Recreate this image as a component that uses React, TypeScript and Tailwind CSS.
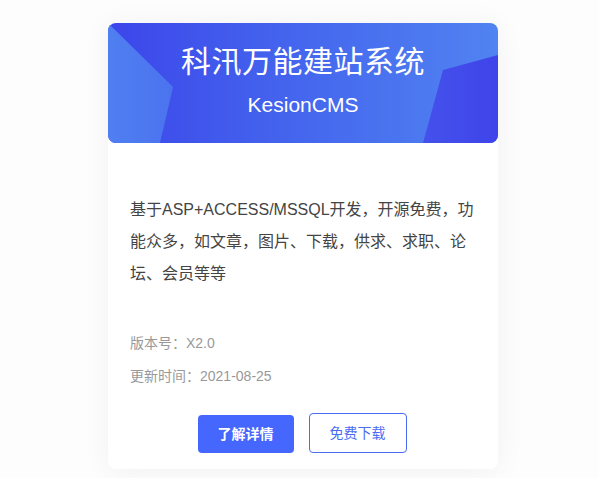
import React from 'react';

const Banner: React.FC = () => (
  <div className="relative h-[120px] rounded-lg overflow-hidden bg-gradient-to-r from-[#3d45ea] to-[#5183f1]">
    {/* decorative shapes */}
    <svg className="absolute inset-0 w-full h-full" viewBox="0 0 390 120" preserveAspectRatio="none">
      <defs>
        <linearGradient id="lg1" x1="0" y1="0" x2="1" y2="0">
          <stop offset="0" stopColor="#4f7ff1" />
          <stop offset="1" stopColor="#4b73ef" />
        </linearGradient>
        <linearGradient id="lg2" x1="0" y1="0" x2="1" y2="0">
          <stop offset="0" stopColor="#4451eb" />
          <stop offset="1" stopColor="#3f44ea" />
        </linearGradient>
      </defs>
      <polygon points="0,0 65,64 52,120 0,120" fill="url(#lg1)" />
      <polygon points="335,47 390,32 390,120 315,120" fill="url(#lg2)" />
    </svg>
    <div className="relative flex flex-col items-center pt-[19px] text-white">
      <h1 className="text-[30px] leading-[40px] tracking-[0.5px]">科汛万能建站系统</h1>
      <p className="mt-[10px] text-[21px] leading-[26px]">KesionCMS</p>
    </div>
  </div>
);

export default function App() {
  return (
    <div
      className="min-h-[478px] bg-[#fdfdfd] pt-[23px]"
      style={{ fontFamily: '"Liberation Sans", "Noto Sans CJK SC", sans-serif' }}
    >
      <div className="ml-[108px] w-[390px] rounded-lg bg-white shadow-[0_2px_30px_rgba(0,0,0,0.05)]">
        <Banner />
        <div className="px-[22px] pt-[51px] pb-[16px]">
          <p className="text-[16px] leading-[32px] text-[#444]">
            基于ASP+ACCESS/MSSQL开发，开源免费，功能众多，如文章，图片、下载，供求、求职、论坛、会员等等
          </p>
          <div className="mt-[37px] text-[14px] leading-[33px] text-[#999]">
            <p>版本号：X2.0</p>
            <p>更新时间：2021-08-25</p>
          </div>
          <div className="mt-[20px] flex justify-center items-end gap-[15px] pr-[2px]">
            <button className="w-[96px] h-[38px] rounded bg-[#4567fe] text-white text-[14px] font-bold">
              了解详情
            </button>
            <button className="w-[98px] h-[40px] rounded border border-[#4a6cf2] text-[#4a6cf2] text-[14px] bg-white">
              免费下载
            </button>
          </div>
        </div>
      </div>
    </div>
  );
}
